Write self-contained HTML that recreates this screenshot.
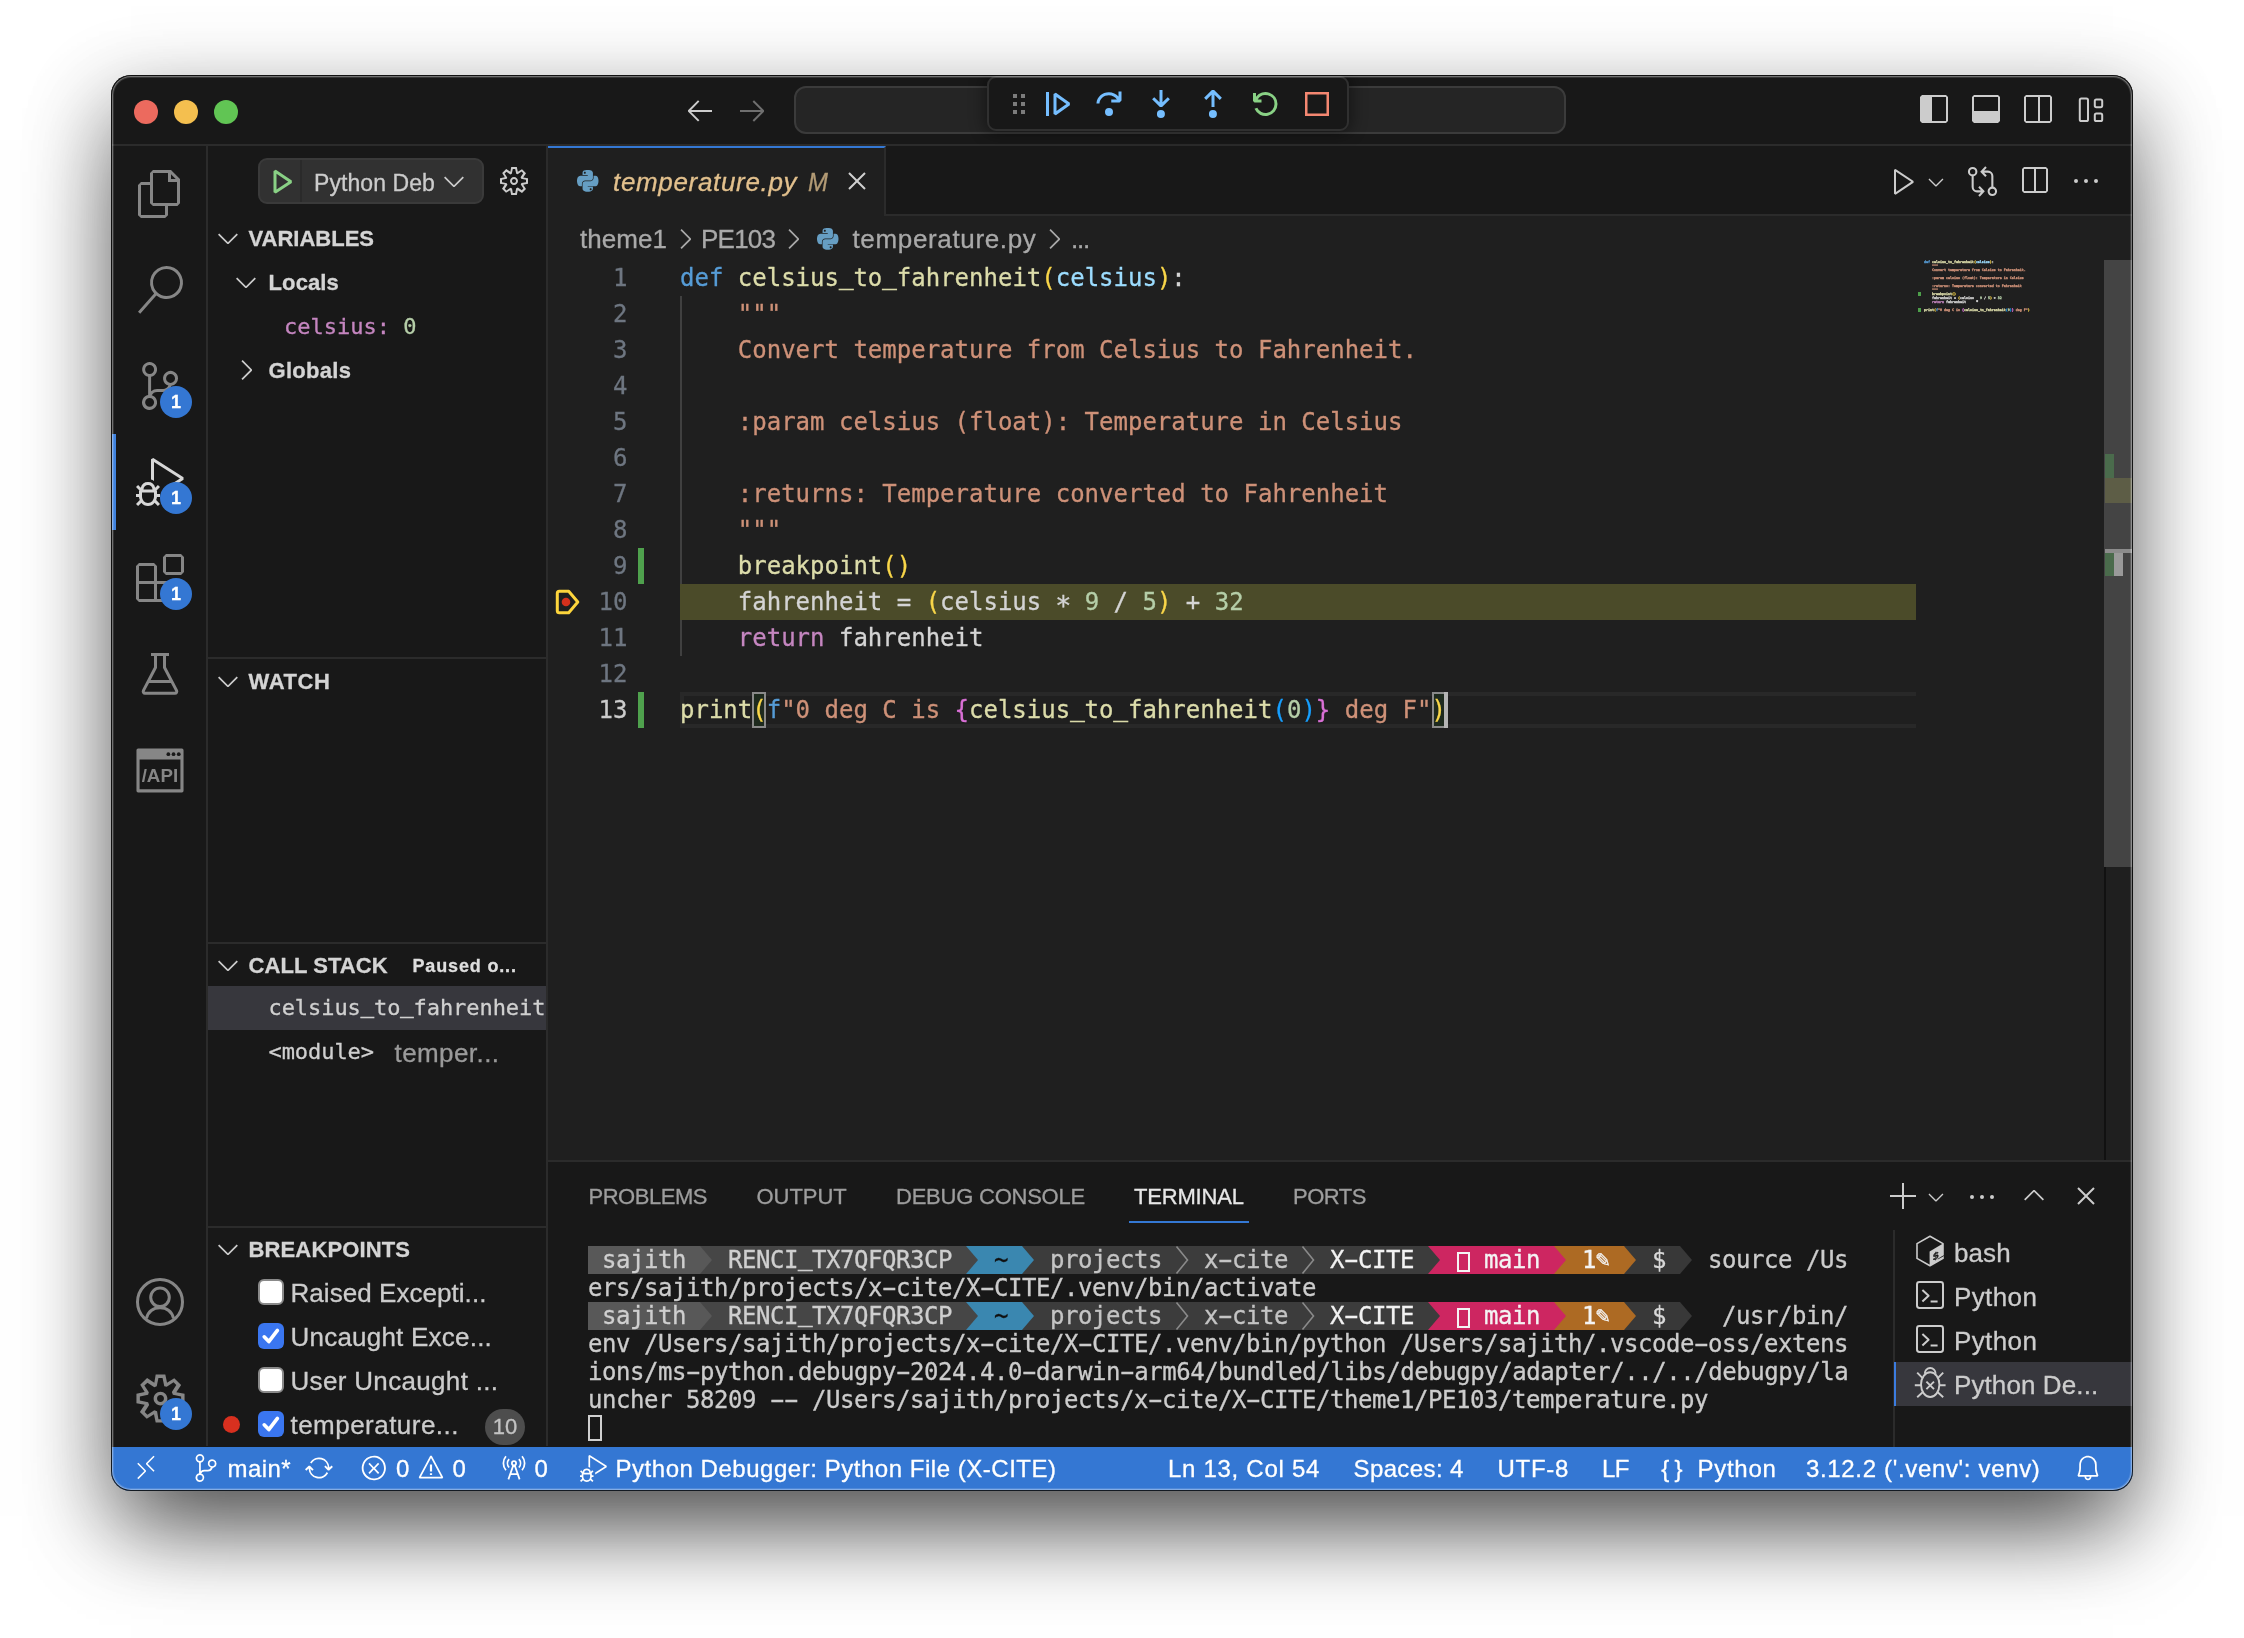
<!DOCTYPE html>
<html lang="en">
<head>
<meta charset="utf-8">
<title>temperature.py — X-CITE</title>
<style>
*{box-sizing:border-box;margin:0;padding:0}
html,body{width:2244px;height:1638px;overflow:hidden;background:#fff}
body{position:relative;font-family:"Liberation Sans",sans-serif;font-size:26px;color:#ccc;-webkit-font-smoothing:antialiased;-webkit-text-stroke:.3px}
.abs{position:absolute}
#shadow{position:absolute;left:111px;top:75px;width:2022px;height:1416px;border-radius:20px;background:#181818;
 box-shadow:0 45px 90px -20px rgba(0,0,0,.68),0 28px 76px 18px rgba(0,0,0,.2)}
#win{will-change:transform;position:absolute;left:0;top:0;width:2244px;height:1638px;clip-path:inset(75px 111px 147px 111px round 20px);background:#181818}
#rim{position:absolute;left:111px;top:75px;width:2022px;height:1416px;border-radius:20px;box-shadow:inset 0 0 0 1px rgba(0,0,0,.85),inset 0 0 0 2px rgba(255,255,255,.3),inset 0 0 0 3px rgba(255,255,255,.13);pointer-events:none;z-index:50}
.mono{font-family:"DejaVu Sans Mono","Liberation Mono",monospace}
svg{position:absolute;overflow:visible}
.t{position:absolute;white-space:pre;line-height:1}
.tl{top:100px;width:24px;height:24px;border-radius:50%}
.badge{position:absolute;width:32px;height:32px;border-radius:50%;background:#3477d3;color:#fff;font-weight:700;font-size:18px;line-height:32px;text-align:center}
.chv{fill:#ccc}
.hd{font-size:22px;font-weight:700;line-height:44px;color:#d4d4d4}
.hr{left:208px;width:338px;height:2px;background:#2b2b2b}
.bp{left:290.500px;font-size:26px;line-height:44px;color:#ccc}
.cb{position:absolute;left:258px;width:26px;height:26px;border-radius:6px;background:#fff;border:2px solid #8a8a8a}
.cb.on{background:#3a76f0;border:none}
.ln{left:548px;width:79.5px;text-align:right;font-size:24px;line-height:36px;color:#6e7681}
.ln.cur{color:#ccc}
.cl{left:680px;font-size:24px;line-height:36px;color:#d4d4d4}
.k{color:#569cd6}.fn{color:#dcdcaa}.b1{color:#f9d649}.b2{color:#da70d6}.b3{color:#179fff}.p{color:#9cdcfe}.s{color:#ce9178}.n{color:#b5cea8}.c{color:#c586c0}.v{color:#d4d4d4}
.mm{left:1924px;top:260px;font-size:3.32px;line-height:4px;white-space:pre;color:#d4d4d4;font-weight:700}
.tm{font-size:24px;line-height:28px;letter-spacing:-.449px}
.sb{top:1447px;font-size:24px;line-height:43px;color:#fff}
.u{position:relative;top:-.1em;-webkit-text-stroke:.7px}
.h{display:inline-block;transform:scaleX(1.85)}
.as{position:relative;top:3.5px;display:inline-block;transform:scale(1.12)}
</style>
</head>
<body>
<div id="shadow"></div>
<div id="win">
<!-- TITLEBAR -->
<div class="abs" style="left:111px;top:75px;width:2022px;height:71px;background:#181818;border-bottom:2px solid #2b2b2b"></div>
<div class="abs tl" style="left:134px;background:#ec6a5e"></div>
<div class="abs tl" style="left:174px;background:#f4bf4f"></div>
<div class="abs tl" style="left:214px;background:#61c554"></div>
<svg style="left:684px;top:94px" width="32" height="32" viewBox="0 0 16 16" fill="#ccc"><path d="M7 3.093l-5 5V8.8l5 5 .707-.707-4.146-4.147H14v-1H3.56L7.708 3.8 7 3.093z"/></svg>
<svg style="left:736px;top:94px" width="32" height="32" viewBox="0 0 16 16" fill="#6f6f6f"><path d="M9 13.887l5-5V8.18l-5-5-.707.707 4.146 4.147H2v1h10.44L8.292 13.18l.707.707z"/></svg>
<div class="abs" style="left:794px;top:86px;width:772px;height:48px;border-radius:12px;background:#252525;border:2px solid #3b3b3b"></div>
<div class="abs" style="left:987px;top:76px;width:362px;height:55px;border-radius:9px;background:#181818;border:2px solid #303030;box-shadow:0 0 16px 2px rgba(0,0,0,.45)"></div>
<svg style="left:1003px;top:88px" width="32" height="32" viewBox="0 0 16 16" fill="#7c7c7c"><path d="M5 3h2v2H5zm0 4h2v2H5zm0 4h2v2H5zm4-8h2v2H9zm0 4h2v2H9zm0 4h2v2H9z"/></svg>
<svg style="left:1041px;top:88px" width="32" height="32" viewBox="0 0 16 16" fill="#75beff"><path d="M2.5 2H4v12H2.5V2zm4.936.39L6.25 3v10l1.186.61 7-5V7.39l-7-5zM12.71 8l-4.96 3.54V4.46L12.71 8z"/></svg>
<svg style="left:1093px;top:88px" width="32" height="32" viewBox="0 0 16 16" fill="#75beff"><path d="M14.25 5.75v-4h-1.5v2.542c-1.145-1.359-2.911-2.209-4.84-2.209-3.177 0-5.92 2.307-6.16 5.398l-.02.269h1.501l.022-.226c.212-2.195 2.202-3.94 4.656-3.94 1.736 0 3.244.875 4.05 2.166h-2.83v1.5h4.163l.962-.975V5.75h-.004zM8 14a2 2 0 1 0 0-4 2 2 0 0 0 0 4z"/></svg>
<svg style="left:1145px;top:88px" width="32" height="32" viewBox="0 0 16 16" fill="#75beff"><path d="M8 9.532h.542l3.905-3.905-1.061-1.06-2.637 2.61V1H7.251v6.177l-2.637-2.61-1.061 1.06 3.905 3.905H8zm1.956 3.481a2 2 0 1 1-4 0 2 2 0 0 1 4 0z"/></svg>
<svg style="left:1197px;top:88px" width="32" height="32" viewBox="0 0 16 16" fill="#75beff"><path d="M8 1h-.542L3.553 4.905l1.061 1.06 2.637-2.61v6.177h1.498V3.355l2.637 2.61 1.061-1.06L8.542 1H8zm1.956 12.013a2 2 0 1 1-4 0 2 2 0 0 1 4 0z"/></svg>
<svg style="left:1249px;top:88px" width="32" height="32" viewBox="0 0 16 16" fill="#89d185"><path d="M12.75 8a4.5 4.5 0 0 1-8.61 1.834l-1.391.565A6.001 6.001 0 0 0 14.25 8 6 6 0 0 0 3.5 4.334V2.5H2v4l.75.75h3.5v-1.5H4.352A4.5 4.5 0 0 1 12.75 8z"/></svg>
<svg style="left:1301px;top:88px" width="32" height="32" viewBox="0 0 16 16" fill="#f48771"><path d="M2 2v12h12V2H2zm10.750 10.750h-9.500v-9.500h9.500v9.500z"/></svg>
<!-- layout icons -->
<svg style="left:1918px;top:93px" width="32" height="32" viewBox="0 0 16 16" fill="#ccc"><path d="M2 1L1 2v12l1 1h12l1-1V2l-1-1H2zm5 13V2h7v12H7z" fill-rule="evenodd"/></svg>
<svg style="left:1970px;top:93px" width="32" height="32" viewBox="0 0 16 16" fill="#ccc"><path d="M2 1L1 2v12l1 1h12l1-1V2l-1-1H2zm0 1h12v7H2V2z" fill-rule="evenodd"/></svg>
<svg style="left:2022px;top:93px" width="32" height="32" viewBox="0 0 16 16" fill="#ccc"><path d="M2 1L1 2v12l1 1h12l1-1V2l-1-1H2zm0 1h6v12H2V2zm7 12V2h5v12H9z" fill-rule="evenodd"/></svg>
<svg style="left:2075px;top:93px" width="32" height="32" viewBox="0 0 16 16" fill="none" stroke="#ccc" stroke-width="1"><rect x="2.400" y="2.800" width="4.100" height="11.200" rx=".8"/><rect x="9.900" y="3.200" width="3.700" height="3.900" rx=".8"/><rect x="9.900" y="10.300" width="3.700" height="3.700" rx=".8"/></svg>
<!-- ACTIVITYBAR -->
<div class="abs" style="left:111px;top:146px;width:97px;height:1300px;background:#181818;border-right:2px solid #2b2b2b"></div>
<div class="abs" style="left:112px;top:434px;width:4px;height:96px;background:#3f82de"></div>
<svg style="left:136px;top:170px" width="48" height="48" viewBox="0 0 24 24" fill="#868686"><path d="M17.5 0h-9L7 1.5V6H2.5L1 7.500v15.070L2.500 24h12.070L16 22.570V18h4.700l1.300-1.430V4.500L17.500 0zm0 2.120l2.380 2.380H17.500V2.120zm-3 20.380h-12v-15H7v9.070L8.500 18h6v4.500zm6-6h-12v-15H16V6h4.500v10.500z"/></svg>
<svg style="left:136px;top:266px" width="48" height="48" viewBox="0 0 24 24" fill="#868686"><path d="M15.250 0a8.250 8.250 0 0 0-6.180 13.720L1 22.880l1.120 1 8.050-9.120A8.251 8.251 0 1 0 15.250.010V0zm0 15a6.750 6.750 0 1 1 0-13.500 6.750 6.750 0 0 1 0 13.500z"/></svg>
<svg style="left:136px;top:362px" width="48" height="48" viewBox="0 0 24 24" fill="#868686"><path d="M21.007 8.222A3.738 3.738 0 0 0 15.045 5.200a3.737 3.737 0 0 0 1.156 6.583 2.988 2.988 0 0 1-2.668 1.670h-2.990a4.456 4.456 0 0 0-2.989 1.165V7.400a3.737 3.737 0 1 0-1.494 0v9.117a3.776 3.776 0 1 0 1.816.099 2.990 2.990 0 0 1 2.668-1.667h2.990a4.484 4.484 0 0 0 4.223-3.039 3.736 3.736 0 0 0 3.250-3.687zM4.565 3.738a2.242 2.242 0 1 1 4.484 0 2.242 2.242 0 0 1-4.484 0zm4.484 16.441a2.242 2.242 0 1 1-4.484 0 2.242 2.242 0 0 1 4.484 0zm8.221-9.715a2.242 2.242 0 1 1 0-4.485 2.242 2.242 0 0 1 0 4.485z"/></svg>
<svg style="left:136px;top:458px" width="48" height="48" viewBox="0 0 24 24" fill="#d7d7d7"><path d="M10.940 13.500l-1.320 1.320a3.730 3.730 0 0 0-7.240 0L1.060 13.500 0 14.560l1.720 1.720-.22.220V18H0v1.500h1.500v.080c.077.489.214.966.410 1.420L0 22.940 1.060 24l1.650-1.650A4.308 4.308 0 0 0 6 24a4.310 4.310 0 0 0 3.290-1.650L10.940 24 12 22.940 10.090 21c.198-.464.336-.951.410-1.450v-.1H12V18h-1.500v-1.500l-.22-.22L12 14.560l-1.060-1.060zM6 13.500a2.250 2.250 0 0 1 2.250 2.250h-4.500A2.250 2.250 0 0 1 6 13.500zm3 6a3.330 3.330 0 0 1-3 3 3.330 3.330 0 0 1-3-3v-2.250h6v2.250zm14.760-9.900v1.260L13.500 17.370V15.600l8.500-5.370L9 2v9.460a5.070 5.070 0 0 0-1.500-.72V.630L8.640 0l15.120 9.600z"/></svg>
<svg style="left:136px;top:554px" width="48" height="48" viewBox="0 0 24 24" fill="#868686"><path d="M13.500 1.500L15 0h7.500L24 1.500V9l-1.500 1.500H15L13.500 9V1.500zm1.500 0V9h7.500V1.500H15zM0 15V6l1.500-1.500H9L10.500 6v7.500H18l1.500 1.500v7.500L18 24H1.500L0 22.500V15zm9-1.500V6H1.500v7.500H9zM9 15H1.500v7.500H9V15zm1.500 7.500H18V15h-7.500v7.500z"/></svg>
<svg style="left:136px;top:650px" width="48" height="48" viewBox="0 0 24 24" fill="none" stroke="#868686" stroke-width="1.500" stroke-linejoin="round"><path d="M7.500 2.250h9M9.750 2.250v6.500L3.700 20.300a.9.900 0 0 0 .8 1.300h15a.9.900 0 0 0 .8-1.300L14.250 8.750v-6.500M6 15.750h12"/></svg>
<svg style="left:135px;top:745.500px" width="50" height="50" viewBox="0 0 24 24"><path d="M1.500 1.200h21a.8.800 0 0 1 .8.800v19.500a.8.800 0 0 1-.8.800h-21a.8.800 0 0 1-.8-.8V2a.8.800 0 0 1 .8-.8zm.7 5.300v14.300h19.600V6.500H2.200z" fill="#868686" fill-rule="evenodd"/><circle cx="16" cy="3.900" r=".9" fill="#181818"/><circle cx="18.500" cy="3.900" r=".9" fill="#181818"/><circle cx="21" cy="3.900" r=".9" fill="#181818"/><text x="3.200" y="17.400" font-family="Liberation Sans,sans-serif" font-weight="700" font-size="8.600" fill="#868686" textLength="17.500" lengthAdjust="spacingAndGlyphs">/API</text></svg>
<!-- account -->
<svg style="left:136px;top:1278px" width="48" height="48" viewBox="0 0 24 24" fill="none" stroke="#868686" stroke-width="1.500"><circle cx="12" cy="12" r="11.250"/><circle cx="12" cy="9.650" r="4.650"/><path d="M5.200 20.200c1-3.600 3.500-5.300 6.800-5.300s5.800 1.700 6.800 5.300"/></svg>
<!-- gear -->
<svg style="left:132.500px;top:1370.500px" width="55" height="55" viewBox="0 0 16 16" fill="#868686"><path d="M9.100 4.400L8.600 2H7.400l-.5 2.400-.7.300-2-1.300-.9.800 1.300 2-.2.700-2.400.5v1.200l2.400.5.300.8-1.300 2 .8.800 2-1.300.8.300.4 2.300h1.200l.5-2.400.8-.3 2 1.300.8-.8-1.300-2 .3-.8 2.300-.4V7.400l-2.400-.5-.3-.8 1.300-2-.8-.8-2 1.300-.7-.2zM9.400 1l.5 2.400L12 2.100l2 2-1.400 2.100 2.400.4v2.800l-2.400.5L14 12l-2 2-2.100-1.400-.5 2.400H6.600l-.5-2.400L4 13.900l-2-2 1.400-2.100L1 9.400V6.600l2.400-.5L2.100 4l2-2 2.100 1.400.4-2.400h2.800zm.6 7c0 1.100-.9 2-2 2s-2-.9-2-2 .9-2 2-2 2 .9 2 2zM8 9c.6 0 1-.4 1-1s-.4-1-1-1-1 .4-1 1 .4 1 1 1z"/></svg>
<div class="badge" style="left:160px;top:386px">1</div>
<div class="badge" style="left:160px;top:482px">1</div>
<div class="badge" style="left:160px;top:578px">1</div>
<div class="badge" style="left:160px;top:1398px">1</div>
<!-- SIDEBAR -->
<div class="abs" style="left:208px;top:146px;width:340px;height:1300px;background:#181818;border-right:2px solid #2b2b2b"></div>
<!-- start debug -->
<div class="abs" style="left:258px;top:158px;width:226px;height:46px;border-radius:9px;background:#313131;border:2px solid #3a3a3a"></div>
<div class="abs" style="left:300px;top:160px;width:2px;height:42px;background:#2a2a2a"></div>
<svg style="left:265px;top:165px" width="32" height="32" viewBox="0 0 16 16" fill="#89d185"><path d="M4.250 3l1.166-.624 8 5.333v1.248l-8 5.334-1.166-.624V3zm1.500 1.401v7.864l5.898-3.932L5.750 4.401z"/></svg>
<div class="t" style="left:314px;top:170px;font-size:23px;letter-spacing:.08px;line-height:26px">Python Deb</div>
<svg style="left:438px;top:165px" width="32" height="32" viewBox="0 0 16 16" fill="#ccc"><path d="M7.976 10.072l4.357-4.357.62.618L8.284 11h-.618L3 6.333l.619-.618 4.357 4.357z"/></svg>
<svg style="left:498px;top:165px" width="32" height="32" viewBox="0 0 16 16" fill="#ccc"><path d="M9.100 4.400L8.600 2H7.400l-.5 2.400-.7.300-2-1.300-.9.800 1.300 2-.2.700-2.400.500v1.200l2.400.500.300.800-1.300 2 .8.800 2-1.300.8.300.4 2.300h1.200l.5-2.400.8-.3 2 1.300.8-.8-1.300-2 .3-.8 2.300-.4V7.400l-2.400-.5-.3-.8 1.300-2-.8-.8-2 1.300-.7-.2zM9.400 1l.5 2.400L12 2.100l2 2-1.400 2.100 2.400.400v2.800l-2.400.500L14 12l-2 2-2.100-1.400-.5 2.400H6.600l-.5-2.400L4 13.900l-2-2 1.400-2.100L1 9.400V6.600l2.400-.5L2.100 4l2-2 2.100 1.400.4-2.400h2.800zm.6 7c0 1.100-.9 2-2 2s-2-.9-2-2 .9-2 2-2 2 .9 2 2zM8 9c.6 0 1-.4 1-1s-.4-1-1-1-1 .4-1 1 .4 1 1 1z"/></svg>
<!-- VARIABLES -->
<svg class="chv" style="left:212px;top:222px" width="32" height="32" viewBox="0 0 16 16"><path d="M7.976 10.072l4.357-4.357.62.618L8.284 11h-.618L3 6.333l.619-.618 4.357 4.357z"/></svg>
<div class="t hd" style="left:248.500px;top:217px">VARIABLES</div>
<svg class="chv" style="left:230px;top:266px" width="32" height="32" viewBox="0 0 16 16"><path d="M7.976 10.072l4.357-4.357.62.618L8.284 11h-.618L3 6.333l.619-.618 4.357 4.357z"/></svg>
<div class="t hd" style="left:268.500px;top:261px;letter-spacing:.13px">Locals</div>
<div class="t mono" style="left:284px;top:305px;font-size:22px;line-height:44px;color:#c586c0">celsius: <span style="color:#b5cea8">0</span></div>
<svg class="chv" style="left:230px;top:354px" width="32" height="32" viewBox="0 0 16 16"><path d="M10.072 8.024L5.715 3.667l.618-.62L11 7.716v.618L6.333 13l-.618-.619 4.357-4.357z"/></svg>
<div class="t hd" style="left:268.500px;top:349px;letter-spacing:.29px">Globals</div>
<!-- WATCH -->
<div class="abs hr" style="top:657px"></div>
<svg class="chv" style="left:212px;top:665px" width="32" height="32" viewBox="0 0 16 16"><path d="M7.976 10.072l4.357-4.357.62.618L8.284 11h-.618L3 6.333l.619-.618 4.357 4.357z"/></svg>
<div class="t hd" style="left:248.500px;top:660px;letter-spacing:.59px">WATCH</div>
<!-- CALL STACK -->
<div class="abs hr" style="top:942px"></div>
<svg class="chv" style="left:212px;top:949px" width="32" height="32" viewBox="0 0 16 16"><path d="M7.976 10.072l4.357-4.357.62.618L8.284 11h-.618L3 6.333l.619-.618 4.357 4.357z"/></svg>
<div class="t hd" style="left:248.500px;top:944px;letter-spacing:.06px">CALL STACK</div>
<div class="t" style="left:412.500px;top:944px;font-size:18px;font-weight:700;letter-spacing:.84px;line-height:44px;color:#dedede">Paused o...</div>
<div class="abs" style="left:208px;top:986px;width:338px;height:44px;background:#37373d"></div>
<div class="t mono" style="left:268.500px;top:986px;font-size:22px;line-height:44px;letter-spacing:-.06px;color:#d0d0d0;width:277.500px;overflow:hidden">celsius<span class="u">_</span>to<span class="u">_</span>fahrenheit</div>
<div class="t mono" style="left:268.500px;top:1030px;font-size:22px;line-height:44px;letter-spacing:-.06px;color:#d0d0d0">&lt;module&gt;</div>
<div class="t" style="left:394.500px;top:1031px;font-size:26px;line-height:44px;letter-spacing:.42px;color:#9a9a9a">temper...</div>
<!-- BREAKPOINTS -->
<div class="abs hr" style="top:1226px"></div>
<svg class="chv" style="left:212px;top:1233px" width="32" height="32" viewBox="0 0 16 16"><path d="M7.976 10.072l4.357-4.357.62.618L8.284 11h-.618L3 6.333l.619-.618 4.357 4.357z"/></svg>
<div class="t hd" style="left:248.500px;top:1228px;letter-spacing:.14px">BREAKPOINTS</div>
<div class="cb" style="top:1279px"></div>
<div class="t bp" style="top:1271px;letter-spacing:.05px">Raised Excepti...</div>
<div class="cb on" style="top:1323px"><svg style="left:0;top:0" width="26" height="26" viewBox="0 0 26 26" fill="none" stroke="#fff" stroke-width="3.600" stroke-linecap="round" stroke-linejoin="round"><path d="M6.200 13.800l4.600 4.800 8.600-11.200"/></svg></div>
<div class="t bp" style="top:1315px;letter-spacing:.22px">Uncaught Exce...</div>
<div class="cb" style="top:1367px"></div>
<div class="t bp" style="top:1359px;letter-spacing:.33px">User Uncaught ...</div>
<div class="abs" style="left:222.500px;top:1415.500px;width:17px;height:17px;border-radius:50%;background:#d8301f"></div>
<div class="cb on" style="top:1411px"><svg style="left:0;top:0" width="26" height="26" viewBox="0 0 26 26" fill="none" stroke="#fff" stroke-width="3.600" stroke-linecap="round" stroke-linejoin="round"><path d="M6.200 13.800l4.600 4.800 8.600-11.200"/></svg></div>
<div class="t bp" style="top:1403px;letter-spacing:.47px">temperature...</div>
<div class="abs" style="left:485px;top:1409px;width:40px;height:36px;border-radius:18px;background:#4d4d4d;color:#c3c3c3;font-size:22px;line-height:36px;text-align:center">10</div>
<!-- EDITOR -->
<div class="abs" style="left:548px;top:146px;width:1585px;height:1015px;background:#1f1f1f"></div>
<div class="abs" style="left:548px;top:146px;width:1585px;height:70px;background:#181818;border-bottom:2px solid #2b2b2b"></div>
<div class="abs" style="left:548px;top:146px;width:338px;height:70px;background:#1f1f1f;border-top:2.5px solid #3478d4;border-right:2px solid #2b2b2b"></div>
<svg style="left:576.8px;top:169.8px" width="21.5" height="21.5" viewBox="0 0 111 110" fill="#669ec3" fill-rule="evenodd"><path d="M54.919 0c-4.584.022-8.961.413-12.813 1.095C30.760 3.099 28.700 7.295 28.700 15.032v10.219h26.813v3.406H18.638c-7.793 0-14.616 4.684-16.750 13.594-2.462 10.213-2.571 16.586 0 27.250 1.906 7.938 6.458 13.594 14.250 13.594h9.219v-12.250c0-8.850 7.657-16.656 16.750-16.656h26.781c7.455 0 13.406-6.138 13.406-13.625v-25.531c0-7.266-6.130-12.725-13.406-13.937C64.282.328 59.502-.020 54.919 0zm-14.500 8.219c2.770 0 5.031 2.299 5.031 5.125 0 2.816-2.262 5.094-5.031 5.094-2.780 0-5.031-2.277-5.031-5.094 0-2.826 2.252-5.125 5.031-5.125z"/><path d="M85.638 28.657v11.906c0 9.231-7.826 17-16.750 17H42.106c-7.336 0-13.406 6.279-13.406 13.625v25.531c0 7.266 6.319 11.540 13.406 13.625 8.487 2.496 16.626 2.947 26.781 0 6.750-1.954 13.406-5.888 13.406-13.625V86.500H55.513v-3.406h40.188c7.793 0 10.696-5.436 13.406-13.594 2.800-8.399 2.680-16.476 0-27.250-1.926-7.757-5.604-13.594-13.406-13.594h-10.063zM70.575 93.313c2.780 0 5.031 2.277 5.031 5.094 0 2.826-2.252 5.125-5.031 5.125-2.770 0-5.031-2.299-5.031-5.125 0-2.816 2.262-5.094 5.031-5.094z"/></svg>
<div class="t" style="left:613px;top:160px;font-size:26px;line-height:44px;font-style:italic;letter-spacing:.67px;color:#e2c08d">temperature.py</div>
<div class="t" style="left:808px;top:160px;font-size:26px;line-height:44px;font-style:italic;letter-spacing:0;color:#b39b75;transform:scaleX(.92);transform-origin:0 0">M</div>
<svg style="left:841px;top:165px" width="32" height="32" viewBox="0 0 16 16" fill="#d0d0d0"><path d="M8 8.707l3.646 3.647.708-.707L8.707 8l3.647-3.646-.707-.708L8 7.293 4.354 3.646l-.707.708L7.293 8l-3.646 3.646.707.708L8 8.707z"/></svg>
<svg style="left:1888px;top:165px" width="32" height="32" viewBox="0 0 16 16" fill="#ccc"><path d="M3.780 2L3 2.410v12l.78.420 9-6V8l-9-6zM4 13.480V3.350l7.600 5.070L4 13.480z"/></svg>
<svg style="left:1924px;top:169.700px" width="24" height="24" viewBox="0 0 16 16" fill="#ccc"><path d="M7.976 10.072l4.357-4.357.62.618L8.284 11h-.618L3 6.333l.619-.618 4.357 4.357z"/></svg>
<svg style="left:1964.500px;top:164px" width="35" height="35" viewBox="0 0 16 16" fill="none" stroke="#ccc" stroke-width=".95"><circle cx="3.500" cy="3.500" r="1.700"/><circle cx="12.500" cy="12.500" r="1.700"/><path d="M3.500 5.200v5.300a2 2 0 0 0 2 2h2.800M6.400 10.400l2 2.100-2 2.100M12.500 10.800V5.500a2 2 0 0 0-2-2H7.700M9.600 1.400l-2 2.100 2 2.100"/></svg>
<svg style="left:2018px;top:165px" width="32" height="32" viewBox="0 0 16 16" fill="#ccc"><path d="M14 1H3L2 2v11l1 1h11l1-1V2l-1-1zM8 13H3V2h5v11zm6 0H9V2h5v11z"/></svg>
<svg style="left:2070px;top:165px" width="32" height="32" viewBox="0 0 16 16" fill="#ccc"><path d="M4 8a1 1 0 1 1-2 0 1 1 0 0 1 2 0zm5 0a1 1 0 1 1-2 0 1 1 0 0 1 2 0zm5 0a1 1 0 1 1-2 0 1 1 0 0 1 2 0z"/></svg>
<div class="t" style="left:580px;top:217px;color:#a9a9a9;font-size:26px;line-height:44px;letter-spacing:.04px">theme1</div>
<svg style="left:669px;top:223px" width="32" height="32" viewBox="0 0 16 16" fill="#a9a9a9"><path d="M10.072 8.024L5.715 3.667l.618-.62L11 7.716v.618L6.333 13l-.618-.619 4.357-4.357z"/></svg>
<div class="t" style="left:701px;top:217px;color:#a9a9a9;font-size:26px;line-height:44px;letter-spacing:-.76px">PE103</div>
<svg style="left:777px;top:223px" width="32" height="32" viewBox="0 0 16 16" fill="#a9a9a9"><path d="M10.072 8.024L5.715 3.667l.618-.62L11 7.716v.618L6.333 13l-.618-.619 4.357-4.357z"/></svg>
<svg style="left:817px;top:228px" width="21.5" height="21.5" viewBox="0 0 111 110" fill="#669ec3" fill-rule="evenodd"><path d="M54.919 0c-4.584.022-8.961.413-12.813 1.095C30.760 3.099 28.700 7.295 28.700 15.032v10.219h26.813v3.406H18.638c-7.793 0-14.616 4.684-16.750 13.594-2.462 10.213-2.571 16.586 0 27.250 1.906 7.938 6.458 13.594 14.250 13.594h9.219v-12.250c0-8.850 7.657-16.656 16.750-16.656h26.781c7.455 0 13.406-6.138 13.406-13.625v-25.531c0-7.266-6.130-12.725-13.406-13.937C64.282.328 59.502-.020 54.919 0zm-14.500 8.219c2.770 0 5.031 2.299 5.031 5.125 0 2.816-2.262 5.094-5.031 5.094-2.780 0-5.031-2.277-5.031-5.094 0-2.826 2.252-5.125 5.031-5.125z"/><path d="M85.638 28.657v11.906c0 9.231-7.826 17-16.750 17H42.106c-7.336 0-13.406 6.279-13.406 13.625v25.531c0 7.266 6.319 11.540 13.406 13.625 8.487 2.496 16.626 2.947 26.781 0 6.750-1.954 13.406-5.888 13.406-13.625V86.500H55.513v-3.406h40.188c7.793 0 10.696-5.436 13.406-13.594 2.800-8.399 2.680-16.476 0-27.250-1.926-7.757-5.604-13.594-13.406-13.594h-10.063zM70.575 93.313c2.780 0 5.031 2.277 5.031 5.094 0 2.826-2.252 5.125-5.031 5.125-2.770 0-5.031-2.299-5.031-5.125 0-2.816 2.262-5.094 5.031-5.094z"/></svg>
<div class="t" style="left:852.5px;top:217px;color:#a9a9a9;font-size:26px;line-height:44px;letter-spacing:.65px">temperature.py</div>
<svg style="left:1038px;top:223px" width="32" height="32" viewBox="0 0 16 16" fill="#a9a9a9"><path d="M10.072 8.024L5.715 3.667l.618-.62L11 7.716v.618L6.333 13l-.618-.619 4.357-4.357z"/></svg>
<div class="t" style="left:1071px;top:217px;color:#a9a9a9;font-size:26px;line-height:44px;letter-spacing:-1.2px">...</div>
<div class="abs" style="left:680px;top:296px;width:2px;height:360px;background:#404040"></div>
<div class="abs" style="left:680px;top:584px;width:1236px;height:36px;background:#4b4b29"></div>
<div class="abs" style="left:680px;top:692px;width:1236px;height:36px;border:4px solid #282828;border-right:none"></div>
<div class="abs" style="left:638px;top:548px;width:6px;height:36px;background:#4fa14d"></div>
<div class="abs" style="left:638px;top:692px;width:6px;height:36px;background:#4fa14d"></div>
<div class="abs" style="left:752px;top:692px;width:14px;height:36px;border:2px solid #8a8a8a;background:#1e2a1e"></div>
<div class="abs" style="left:1432px;top:692px;width:14px;height:36px;border:2px solid #8a8a8a;background:#1e2a1e"></div>
<div class="abs" style="left:1444px;top:692px;width:4px;height:36px;background:#b4b4b4"></div>
<div class="t mono ln" style="top:260px">1</div><div class="t mono cl" style="top:260px"><span class="k">def</span> <span class="fn">celsius<span class="u">_</span>to<span class="u">_</span>fahrenheit</span><span class="b1">(</span><span class="p">celsius</span><span class="b1">)</span>:</div>
<div class="t mono ln" style="top:296px">2</div><div class="t mono cl" style="top:296px">    <span class="s">&quot;&quot;&quot;</span></div>
<div class="t mono ln" style="top:332px">3</div><div class="t mono cl" style="top:332px">    <span class="s">Convert temperature from Celsius to Fahrenheit.</span></div>
<div class="t mono ln" style="top:368px">4</div>
<div class="t mono ln" style="top:404px">5</div><div class="t mono cl" style="top:404px">    <span class="s">:param celsius (float): Temperature in Celsius</span></div>
<div class="t mono ln" style="top:440px">6</div>
<div class="t mono ln" style="top:476px">7</div><div class="t mono cl" style="top:476px">    <span class="s">:returns: Temperature converted to Fahrenheit</span></div>
<div class="t mono ln" style="top:512px">8</div><div class="t mono cl" style="top:512px">    <span class="s">&quot;&quot;&quot;</span></div>
<div class="t mono ln" style="top:548px">9</div><div class="t mono cl" style="top:548px">    <span class="fn">breakpoint</span><span class="b1">()</span></div>
<div class="t mono ln" style="top:584px">10</div><div class="t mono cl" style="top:584px">    <span class="v">fahrenheit</span> = <span class="b1">(</span><span class="v">celsius</span> <span class="as">*</span> <span class="n">9</span> / <span class="n">5</span><span class="b1">)</span> + <span class="n">32</span></div>
<div class="t mono ln" style="top:620px">11</div><div class="t mono cl" style="top:620px">    <span class="c">return</span> <span class="v">fahrenheit</span></div>
<div class="t mono ln" style="top:656px">12</div>
<div class="t mono ln cur" style="top:692px">13</div><div class="t mono cl" style="top:692px"><span class="fn">print</span><span class="b1">(</span><span class="k">f</span><span class="s">&quot;0 deg C is </span><span class="b2">{</span><span class="fn">celsius<span class="u">_</span>to<span class="u">_</span>fahrenheit</span><span class="b3">(</span><span class="n">0</span><span class="b3">)</span><span class="b2">}</span><span class="s"> deg F&quot;</span><span class="b1">)</span></div>
<svg style="left:0;top:0" width="700" height="700" viewBox="0 0 700 700"><path d="M559.300 591.300h9.400l9.100 10.700-9.100 10.700h-9.400a2 2 0 0 1-2-2v-17.400a2 2 0 0 1 2-2z" fill="none" stroke="#fdd53c" stroke-width="3" stroke-linejoin="round"/><circle cx="566" cy="602" r="4.300" fill="#d5301c"/></svg>
<div class="abs mono mm" aria-hidden="true"><div><span class="k">def</span> <span class="fn">celsius_to_fahrenheit</span><span class="b1">(</span><span class="p">celsius</span><span class="b1">)</span>:</div><div>    <span class="s">&quot;&quot;&quot;</span></div><div>    <span class="s">Convert temperature from Celsius to Fahrenheit.</span></div><div>&nbsp;</div><div>    <span class="s">:param celsius (float): Temperature in Celsius</span></div><div>&nbsp;</div><div>    <span class="s">:returns: Temperature converted to Fahrenheit</span></div><div>    <span class="s">&quot;&quot;&quot;</span></div><div>    <span class="fn">breakpoint</span><span class="b1">()</span></div><div>    <span class="v">fahrenheit</span> = <span class="b1">(</span><span class="v">celsius</span> <span class="as">*</span> <span class="n">9</span> / <span class="n">5</span><span class="b1">)</span> + <span class="n">32</span></div><div>    <span class="c">return</span> <span class="v">fahrenheit</span></div><div>&nbsp;</div><div><span class="fn">print</span><span class="b1">(</span><span class="k">f</span><span class="s">&quot;0 deg C is </span><span class="b2">{</span><span class="fn">celsius_to_fahrenheit</span><span class="b3">(</span><span class="n">0</span><span class="b3">)</span><span class="b2">}</span><span class="s"> deg F&quot;</span><span class="b1">)</span></div></div>
<div class="abs" style="left:1918px;top:292px;width:3px;height:4px;background:#4d9f4a"></div><div class="abs" style="left:1918px;top:308px;width:3px;height:4px;background:#4d9f4a"></div>
<div class="abs" style="left:2104px;top:260px;width:29px;height:607px;background:#444"></div>
<div class="abs" style="left:2104px;top:867px;width:1.5px;height:294px;background:#111"></div>
<div class="abs" style="left:2105px;top:454px;width:9px;height:24px;background:#4a6b4c"></div>
<div class="abs" style="left:2105px;top:478px;width:27px;height:25px;background:#5d5d46"></div>
<div class="abs" style="left:2105px;top:549px;width:27px;height:3.500px;background:#8c8c8c"></div>
<div class="abs" style="left:2105px;top:553px;width:9px;height:23px;background:#4a6b4c"></div>
<div class="abs" style="left:2114px;top:553px;width:9px;height:23px;background:#9a9a9a"></div>
<!-- PANEL -->
<div class="abs" style="left:548px;top:1160px;width:1585px;height:287px;background:#181818;border-top:2px solid #2b2b2b"></div>
<div class="t" style="left:588.5px;top:1175px;font-size:22px;line-height:44px;letter-spacing:-0.48px;color:#9d9d9d">PROBLEMS</div>
<div class="t" style="left:756.5px;top:1175px;font-size:22px;line-height:44px;letter-spacing:-0.04px;color:#9d9d9d">OUTPUT</div>
<div class="t" style="left:896px;top:1175px;font-size:22px;line-height:44px;letter-spacing:-0.23px;color:#9d9d9d">DEBUG CONSOLE</div>
<div class="t" style="left:1134px;top:1175px;font-size:22px;line-height:44px;letter-spacing:-0.19px;color:#e7e7e7">TERMINAL</div>
<div class="t" style="left:1293px;top:1175px;font-size:22px;line-height:44px;letter-spacing:-0.48px;color:#9d9d9d">PORTS</div>
<div class="abs" style="left:1129px;top:1221px;width:120px;height:2px;background:#3478d4"></div>
<svg style="left:1888px;top:1181px" width="32" height="32" viewBox="0 0 16 16" fill="#ccc"><path d="M14 7v1H8v6H7V8H1V7h6V1h1v6h6z"/></svg>
<svg style="left:1924px;top:1185px" width="24" height="24" viewBox="0 0 16 16" fill="#ccc"><path d="M7.976 10.072l4.357-4.357.62.618L8.284 11h-.618L3 6.333l.619-.618 4.357 4.357z"/></svg>
<svg style="left:1966px;top:1181px" width="32" height="32" viewBox="0 0 16 16" fill="#ccc"><path d="M4 8a1 1 0 1 1-2 0 1 1 0 0 1 2 0zm5 0a1 1 0 1 1-2 0 1 1 0 0 1 2 0zm5 0a1 1 0 1 1-2 0 1 1 0 0 1 2 0z"/></svg>
<svg style="left:2018px;top:1180px" width="32" height="32" viewBox="0 0 16 16" fill="#ccc"><path d="M8.024 5.928l-4.357 4.357-.62-.618L7.716 5h.618L13 9.667l-.619.618-4.357-4.357z"/></svg>
<svg style="left:2070px;top:1180px" width="32" height="32" viewBox="0 0 16 16" fill="#ccc"><path d="M8 8.707l3.646 3.647.708-.707L8.707 8l3.647-3.646-.707-.708L8 7.293 4.354 3.646l-.707.708L7.293 8l-3.646 3.646.707.708L8 8.707z"/></svg>
<div class="abs" style="left:588px;top:1246px;width:112px;height:28px;background:#585858"></div><div class="abs" style="left:700px;top:1246px;width:266px;height:28px;background:#464646"></div><div class="abs" style="left:966px;top:1246px;width:56px;height:28px;background:#3a87b0"></div><div class="abs" style="left:1022px;top:1246px;width:406px;height:28px;background:#3c3c3c"></div><div class="abs" style="left:1428px;top:1246px;width:126px;height:28px;background:#cd2661"></div><div class="abs" style="left:1554px;top:1246px;width:70px;height:28px;background:#ad6a23"></div><div class="abs" style="left:1624px;top:1246px;width:56px;height:28px;background:#383838"></div><svg style="left:700px;top:1246px" width="14" height="28" viewBox="0 0 14 28"><path d="M0 0l12 14L0 28z" fill="#585858"/></svg><svg style="left:966px;top:1246px" width="14" height="28" viewBox="0 0 14 28"><path d="M0 0l12 14L0 28z" fill="#464646"/></svg><svg style="left:1022px;top:1246px" width="14" height="28" viewBox="0 0 14 28"><path d="M0 0l12 14L0 28z" fill="#3a87b0"/></svg><svg style="left:1428px;top:1246px" width="14" height="28" viewBox="0 0 14 28"><path d="M0 0l12 14L0 28z" fill="#3c3c3c"/></svg><svg style="left:1554px;top:1246px" width="14" height="28" viewBox="0 0 14 28"><path d="M0 0l12 14L0 28z" fill="#cd2661"/></svg><svg style="left:1624px;top:1246px" width="14" height="28" viewBox="0 0 14 28"><path d="M0 0l12 14L0 28z" fill="#ad6a23"/></svg><svg style="left:1680px;top:1246px" width="14" height="28" viewBox="0 0 14 28"><path d="M0 0l12 14L0 28z" fill="#383838"/></svg><svg style="left:1176px;top:1246px" width="14" height="28" viewBox="0 0 14 28"><path d="M0.500 0.500l11 13.500-11 13.500" fill="none" stroke="#8a8a8a" stroke-width="1.600"/></svg><svg style="left:1302px;top:1246px" width="14" height="28" viewBox="0 0 14 28"><path d="M0.500 0.500l11 13.500-11 13.500" fill="none" stroke="#8a8a8a" stroke-width="1.600"/></svg><div class="t mono tm" style="left:602px;top:1245.5px;color:#cfcfcf">sajith</div><div class="t mono tm" style="left:728px;top:1245.5px;color:#cfcfcf">RENCI<span class="u">_</span>TX7QFQR3CP</div><div class="t mono tm" style="left:994px;top:1245.5px;color:#101010">~</div><div class="t mono tm" style="left:1050px;top:1245.5px;color:#c4c4c4">projects</div><div class="t mono tm" style="left:1204px;top:1245.5px;color:#c4c4c4">x<span class="h">-</span>cite</div><div class="t mono tm" style="left:1330px;top:1245.5px;color:#f2f2f2">X<span class="h">-</span>CITE</div><div class="abs" style="left:1456.5px;top:1252px;width:13px;height:20px;border:2px solid #f4f4f4"></div><div class="t mono tm" style="left:1484px;top:1245.5px;color:#f4f4f4">main</div><div class="t mono tm" style="left:1582px;top:1245.5px;color:#f4f4f4">1</div><div class="t" style="left:1595px;top:1246px;font-family:'DejaVu Sans',sans-serif;font-size:19px;line-height:28px;color:#f4f4f4">&#x270E;</div><div class="t mono tm" style="left:1652px;top:1245.5px;color:#d8d8d8">$</div>
<div class="t mono tm" style="left:1708px;top:1245.5px;color:#ccc">source /Us</div>
<div class="t mono tm" style="left:588px;top:1273.5px;color:#ccc">ers/sajith/projects/x<span class="h">-</span>cite/X<span class="h">-</span>CITE/.venv/bin/activate</div>
<div class="abs" style="left:588px;top:1302px;width:112px;height:28px;background:#585858"></div><div class="abs" style="left:700px;top:1302px;width:266px;height:28px;background:#464646"></div><div class="abs" style="left:966px;top:1302px;width:56px;height:28px;background:#3a87b0"></div><div class="abs" style="left:1022px;top:1302px;width:406px;height:28px;background:#3c3c3c"></div><div class="abs" style="left:1428px;top:1302px;width:126px;height:28px;background:#cd2661"></div><div class="abs" style="left:1554px;top:1302px;width:70px;height:28px;background:#ad6a23"></div><div class="abs" style="left:1624px;top:1302px;width:56px;height:28px;background:#383838"></div><svg style="left:700px;top:1302px" width="14" height="28" viewBox="0 0 14 28"><path d="M0 0l12 14L0 28z" fill="#585858"/></svg><svg style="left:966px;top:1302px" width="14" height="28" viewBox="0 0 14 28"><path d="M0 0l12 14L0 28z" fill="#464646"/></svg><svg style="left:1022px;top:1302px" width="14" height="28" viewBox="0 0 14 28"><path d="M0 0l12 14L0 28z" fill="#3a87b0"/></svg><svg style="left:1428px;top:1302px" width="14" height="28" viewBox="0 0 14 28"><path d="M0 0l12 14L0 28z" fill="#3c3c3c"/></svg><svg style="left:1554px;top:1302px" width="14" height="28" viewBox="0 0 14 28"><path d="M0 0l12 14L0 28z" fill="#cd2661"/></svg><svg style="left:1624px;top:1302px" width="14" height="28" viewBox="0 0 14 28"><path d="M0 0l12 14L0 28z" fill="#ad6a23"/></svg><svg style="left:1680px;top:1302px" width="14" height="28" viewBox="0 0 14 28"><path d="M0 0l12 14L0 28z" fill="#383838"/></svg><svg style="left:1176px;top:1302px" width="14" height="28" viewBox="0 0 14 28"><path d="M0.500 0.500l11 13.500-11 13.500" fill="none" stroke="#8a8a8a" stroke-width="1.600"/></svg><svg style="left:1302px;top:1302px" width="14" height="28" viewBox="0 0 14 28"><path d="M0.500 0.500l11 13.500-11 13.500" fill="none" stroke="#8a8a8a" stroke-width="1.600"/></svg><div class="t mono tm" style="left:602px;top:1301.5px;color:#cfcfcf">sajith</div><div class="t mono tm" style="left:728px;top:1301.5px;color:#cfcfcf">RENCI<span class="u">_</span>TX7QFQR3CP</div><div class="t mono tm" style="left:994px;top:1301.5px;color:#101010">~</div><div class="t mono tm" style="left:1050px;top:1301.5px;color:#c4c4c4">projects</div><div class="t mono tm" style="left:1204px;top:1301.5px;color:#c4c4c4">x<span class="h">-</span>cite</div><div class="t mono tm" style="left:1330px;top:1301.5px;color:#f2f2f2">X<span class="h">-</span>CITE</div><div class="abs" style="left:1456.5px;top:1308px;width:13px;height:20px;border:2px solid #f4f4f4"></div><div class="t mono tm" style="left:1484px;top:1301.5px;color:#f4f4f4">main</div><div class="t mono tm" style="left:1582px;top:1301.5px;color:#f4f4f4">1</div><div class="t" style="left:1595px;top:1302px;font-family:'DejaVu Sans',sans-serif;font-size:19px;line-height:28px;color:#f4f4f4">&#x270E;</div><div class="t mono tm" style="left:1652px;top:1301.5px;color:#d8d8d8">$</div>
<div class="t mono tm" style="left:1722px;top:1301.5px;color:#ccc">/usr/bin/</div>
<div class="t mono tm" style="left:588px;top:1329.5px;color:#ccc">env /Users/sajith/projects/x<span class="h">-</span>cite/X<span class="h">-</span>CITE/.venv/bin/python /Users/sajith/.vscode<span class="h">-</span>oss/extens</div>
<div class="t mono tm" style="left:588px;top:1357.5px;color:#ccc">ions/ms<span class="h">-</span>python.debugpy<span class="h">-</span>2024.4.0<span class="h">-</span>darwin<span class="h">-</span>arm64/bundled/libs/debugpy/adapter/../../debugpy/la</div>
<div class="t mono tm" style="left:588px;top:1385.5px;color:#ccc">uncher 58209 <span class="h">-</span><span class="h">-</span> /Users/sajith/projects/x<span class="h">-</span>cite/X<span class="h">-</span>CITE/theme1/PE103/temperature.py</div>
<div class="abs" style="left:588px;top:1415px;width:14px;height:26px;border:2px solid #d0d0d0"></div>
<div class="abs" style="left:1893px;top:1230px;width:1.5px;height:217px;background:#2b2b2b"></div>
<div class="abs" style="left:1894px;top:1362px;width:239px;height:44px;background:#37373d;border-left:2.500px solid #3b7ce0"></div>
<div class="t" style="left:1954px;top:1230.7px;font-size:26px;line-height:44px;letter-spacing:0.1px;color:#ccc">bash</div>
<div class="t" style="left:1954px;top:1274.7px;font-size:26px;line-height:44px;letter-spacing:0.39px;color:#ccc">Python</div>
<div class="t" style="left:1954px;top:1318.7px;font-size:26px;line-height:44px;letter-spacing:0.39px;color:#ccc">Python</div>
<div class="t" style="left:1954px;top:1362.7px;font-size:26px;line-height:44px;letter-spacing:0.1px;color:#ccc">Python De...</div>
<svg style="left:1914px;top:1235px" width="32" height="32" viewBox="0 0 16 16" fill="none" stroke="#ccc" stroke-width=".8" stroke-linejoin="round"><path d="M8 .600l6.500 3.700v7.400L8 15.400 1.500 11.700V4.300L8 .600z"/><path d="M7.800 8.200L14.500 4.300v7.400L7.800 15.400z" fill="#ccc" stroke="none"/></svg>
<div class="t" style="left:1932.500px;top:1250px;font-size:10px;font-weight:700;line-height:10px;color:#181818;transform:skewY(-30deg);letter-spacing:-.5px">$_</div>
<svg style="left:1914px;top:1279px" width="32" height="32" viewBox="0 0 16 16" fill="none" stroke="#ccc" stroke-width="1" stroke-linejoin="round"><rect x="1.500" y="1.500" width="13" height="13" rx="1.200"/><path d="M4.200 5.500l3.100 2.900-3.100 2.900M8.300 11.300h3.500"/></svg>
<svg style="left:1914px;top:1323px" width="32" height="32" viewBox="0 0 16 16" fill="none" stroke="#ccc" stroke-width="1" stroke-linejoin="round"><rect x="1.500" y="1.500" width="13" height="13" rx="1.200"/><path d="M4.200 5.500l3.100 2.900-3.100 2.900M8.300 11.300h3.500"/></svg>
<svg style="left:1914px;top:1366.500px" width="32" height="32" viewBox="0 0 16 16" fill="none" stroke="#ccc" stroke-width=".95"><path d="M5.400 3.400a2.700 2.900 0 0 1 5.400 0"/><ellipse cx="8.100" cy="8.800" rx="4.600" ry="6.200"/><path d="M3.500 9.100H.4M12.700 9.100h3.100M4.300 5.600L1.600 2.800M11.900 5.600l2.700-2.800M4.600 12.400l-3 2.700M11.600 12.400l3 2.700M6.200 7.300l3.800 3.800M10 7.300l-3.800 3.800"/></svg>
<!-- STATUSBAR -->
<div class="abs" style="left:111px;top:1447px;width:2022px;height:44px;background:#3477d3"></div>
<svg style="left:132px;top:1453.5px" width="28" height="28" viewBox="0 0 16 16" fill="#fff"><path d="M12.904 9.570L8.928 5.596l3.976-3.976-.619-.62L8 5.286v.619l4.285 4.285.62-.618zM3 5.620l4.072 4.072L3 13.763l.619.618L8 10v-.619L3.619 5 3 5.620z"/></svg>
<svg style="left:192px;top:1454px" width="28" height="28" viewBox="0 0 24 24" fill="#fff"><path d="M21.007 8.222A3.738 3.738 0 0 0 15.045 5.200a3.737 3.737 0 0 0 1.156 6.583 2.988 2.988 0 0 1-2.668 1.670h-2.990a4.456 4.456 0 0 0-2.989 1.165V7.400a3.737 3.737 0 1 0-1.494 0v9.117a3.776 3.776 0 1 0 1.816.099 2.990 2.990 0 0 1 2.668-1.667h2.990a4.484 4.484 0 0 0 4.223-3.039 3.736 3.736 0 0 0 3.250-3.687zM4.565 3.738a2.242 2.242 0 1 1 4.484 0 2.242 2.242 0 0 1-4.484 0zm4.484 16.441a2.242 2.242 0 1 1-4.484 0 2.242 2.242 0 0 1 4.484 0zm8.221-9.715a2.242 2.242 0 1 1 0-4.485 2.242 2.242 0 0 1 0 4.485z"/></svg>
<div class="t sb" style="left:227.5px;letter-spacing:0.41px">main*</div>
<svg style="left:304.5px;top:1454px" width="28" height="28" viewBox="0 0 16 16" fill="#fff"><path d="M2.006 8.267L.780 9.500 0 8.730l2.090-2.070.76.010 2.090 2.120-.76.760-1.167-1.180a5 5 0 0 0 9.400 1.983l.813.597a6 6 0 0 1-11.220-2.683zm10.990-.466L11.760 6.550l-.76.760 2.090 2.110.76.010 2.090-2.070-.75-.760-1.194 1.180a6 6 0 0 0-11.110-2.920l.81.594a5 5 0 0 1 9.300 2.346z"/></svg>
<svg style="left:360px;top:1454px" width="28" height="28" viewBox="0 0 16 16" fill="#fff"><path d="M8.600 1c1.600.1 3.100.9 4.200 2 1.300 1.400 2 3.100 2 5.100 0 1.600-.6 3.100-1.600 4.400-1 1.200-2.400 2.100-4 2.400-1.600.3-3.200.1-4.600-.7-1.400-.8-2.500-2-3.100-3.500C.900 9.200.8 7.500 1.300 6c.5-1.600 1.400-2.900 2.800-3.800C5.400 1.300 7 .9 8.600 1zm.5 12.900c1.300-.3 2.500-1 3.400-2.100.8-1.100 1.300-2.400 1.200-3.800 0-1.600-.6-3.200-1.700-4.300-1-1-2.200-1.600-3.600-1.700-1.300-.1-2.700.2-3.800 1-1.100.8-1.900 1.900-2.300 3.300-.4 1.300-.4 2.700.2 4 .6 1.300 1.500 2.300 2.700 3 1.200.7 2.600.9 3.900.6zM7.900 7.500L10.300 5l.7.7-2.400 2.500 2.400 2.500-.7.7-2.400-2.500-2.400 2.500-.7-.7 2.400-2.500-2.400-2.500.7-.7 2.400 2.500z"/></svg>
<div class="t sb" style="left:396px;letter-spacing:0px">0</div>
<svg style="left:417px;top:1454px" width="28" height="28" viewBox="0 0 16 16" fill="#fff"><path d="M7.560 1h.880l6.540 12.260-.44.740H1.440L1 13.260 7.560 1zM8 2.280L2.280 13H13.700L8 2.280zM8.625 12v-1h-1.250v1h1.250zm-1.250-2V6h1.250v4h-1.250z"/></svg>
<div class="t sb" style="left:452.5px;letter-spacing:0px">0</div>
<svg style="left:500px;top:1454px" width="28" height="28" viewBox="0 0 16 16" fill="none" stroke="#fff" stroke-width="1"><circle cx="8" cy="5.300" r="1.200"/><path d="M7.600 6.500L4.800 14.500M8.400 6.500l2.800 8M5.900 11.500h4.200M5.200 2.900a3.600 3.600 0 0 0 0 4.800M10.800 2.900a3.600 3.600 0 0 1 0 4.800M3.400 1.300a6.200 6.200 0 0 0 0 8M12.600 1.300a6.200 6.200 0 0 1 0 8"/></svg>
<div class="t sb" style="left:534.5px;letter-spacing:0px">0</div>
<svg style="left:579.5px;top:1455px" width="27" height="27" viewBox="0 0 24 24" fill="#fff"><path d="M10.940 13.500l-1.320 1.320a3.730 3.730 0 0 0-7.240 0L1.060 13.500 0 14.560l1.720 1.720-.22.220V18H0v1.500h1.500v.080c.077.489.214.966.410 1.420L0 22.940 1.060 24l1.650-1.650A4.308 4.308 0 0 0 6 24a4.310 4.310 0 0 0 3.290-1.650L10.940 24 12 22.940 10.090 21c.198-.464.336-.951.410-1.450v-.1H12V18h-1.500v-1.500l-.22-.22L12 14.560l-1.060-1.060zM6 13.500a2.250 2.250 0 0 1 2.250 2.250h-4.500A2.250 2.250 0 0 1 6 13.500zm3 6a3.330 3.330 0 0 1-3 3 3.330 3.330 0 0 1-3-3v-2.250h6v2.250zm14.760-9.900v1.260L13.500 17.370V15.600l8.500-5.370L9 2v9.460a5.070 5.070 0 0 0-1.500-.72V.630L8.640 0l15.120 9.600z"/></svg>
<div class="t sb" style="left:615.5px;letter-spacing:0.53px">Python Debugger: Python File (X-CITE)</div>
<div class="t sb" style="left:1168px;letter-spacing:0.71px">Ln 13, Col 54</div>
<div class="t sb" style="left:1353.5px;letter-spacing:0.39px">Spaces: 4</div>
<div class="t sb" style="left:1497.5px;letter-spacing:0.7px">UTF-8</div>
<div class="t sb" style="left:1602px;letter-spacing:-0.5px">LF</div>
<div class="t sb" style="left:1661.2px;letter-spacing:5.2px">{}</div>
<div class="t sb" style="left:1697.5px;letter-spacing:0.73px">Python</div>
<div class="t sb" style="left:1806px;letter-spacing:0.66px">3.12.2 ('.venv': venv)</div>
<svg style="left:2074px;top:1454px" width="28" height="28" viewBox="0 0 16 16" fill="#fff"><path d="M13.377 10.573a7.630 7.630 0 0 1-.383-2.380V6.195a5.115 5.115 0 0 0-1.268-3.446 5.138 5.138 0 0 0-3.242-1.722c-.694-.072-1.400 0-2.070.227-.67.215-1.280.574-1.794 1.053a4.923 4.923 0 0 0-1.208 1.675 5.067 5.067 0 0 0-.431 2.022v2.200a7.610 7.610 0 0 1-.383 2.370L2 12.343l.479.658h3.505c0 .526.215 1.040.586 1.412.37.370.885.586 1.412.586.526 0 1.040-.215 1.411-.586s.587-.886.587-1.412h3.505l.478-.658-.586-1.770zm-4.690 3.147a.997.997 0 0 1-.705.299.997.997 0 0 1-.706-.3.997.997 0 0 1-.3-.705h1.999a.939.939 0 0 1-.287.706zm-5.515-1.710l.371-1.114a8.633 8.633 0 0 0 .443-2.691V6.004c0-.563.120-1.113.347-1.616.227-.514.550-.969.969-1.340.419-.382.910-.67 1.436-.837.538-.18 1.100-.24 1.650-.18a4.147 4.147 0 0 1 2.597 1.400 4.133 4.133 0 0 1 1.004 2.776v2.010c0 .909.144 1.818.443 2.691l.371 1.113h-9.630v-.012z"/></svg>
</div>
<div id="rim"></div>
</body>
</html>
